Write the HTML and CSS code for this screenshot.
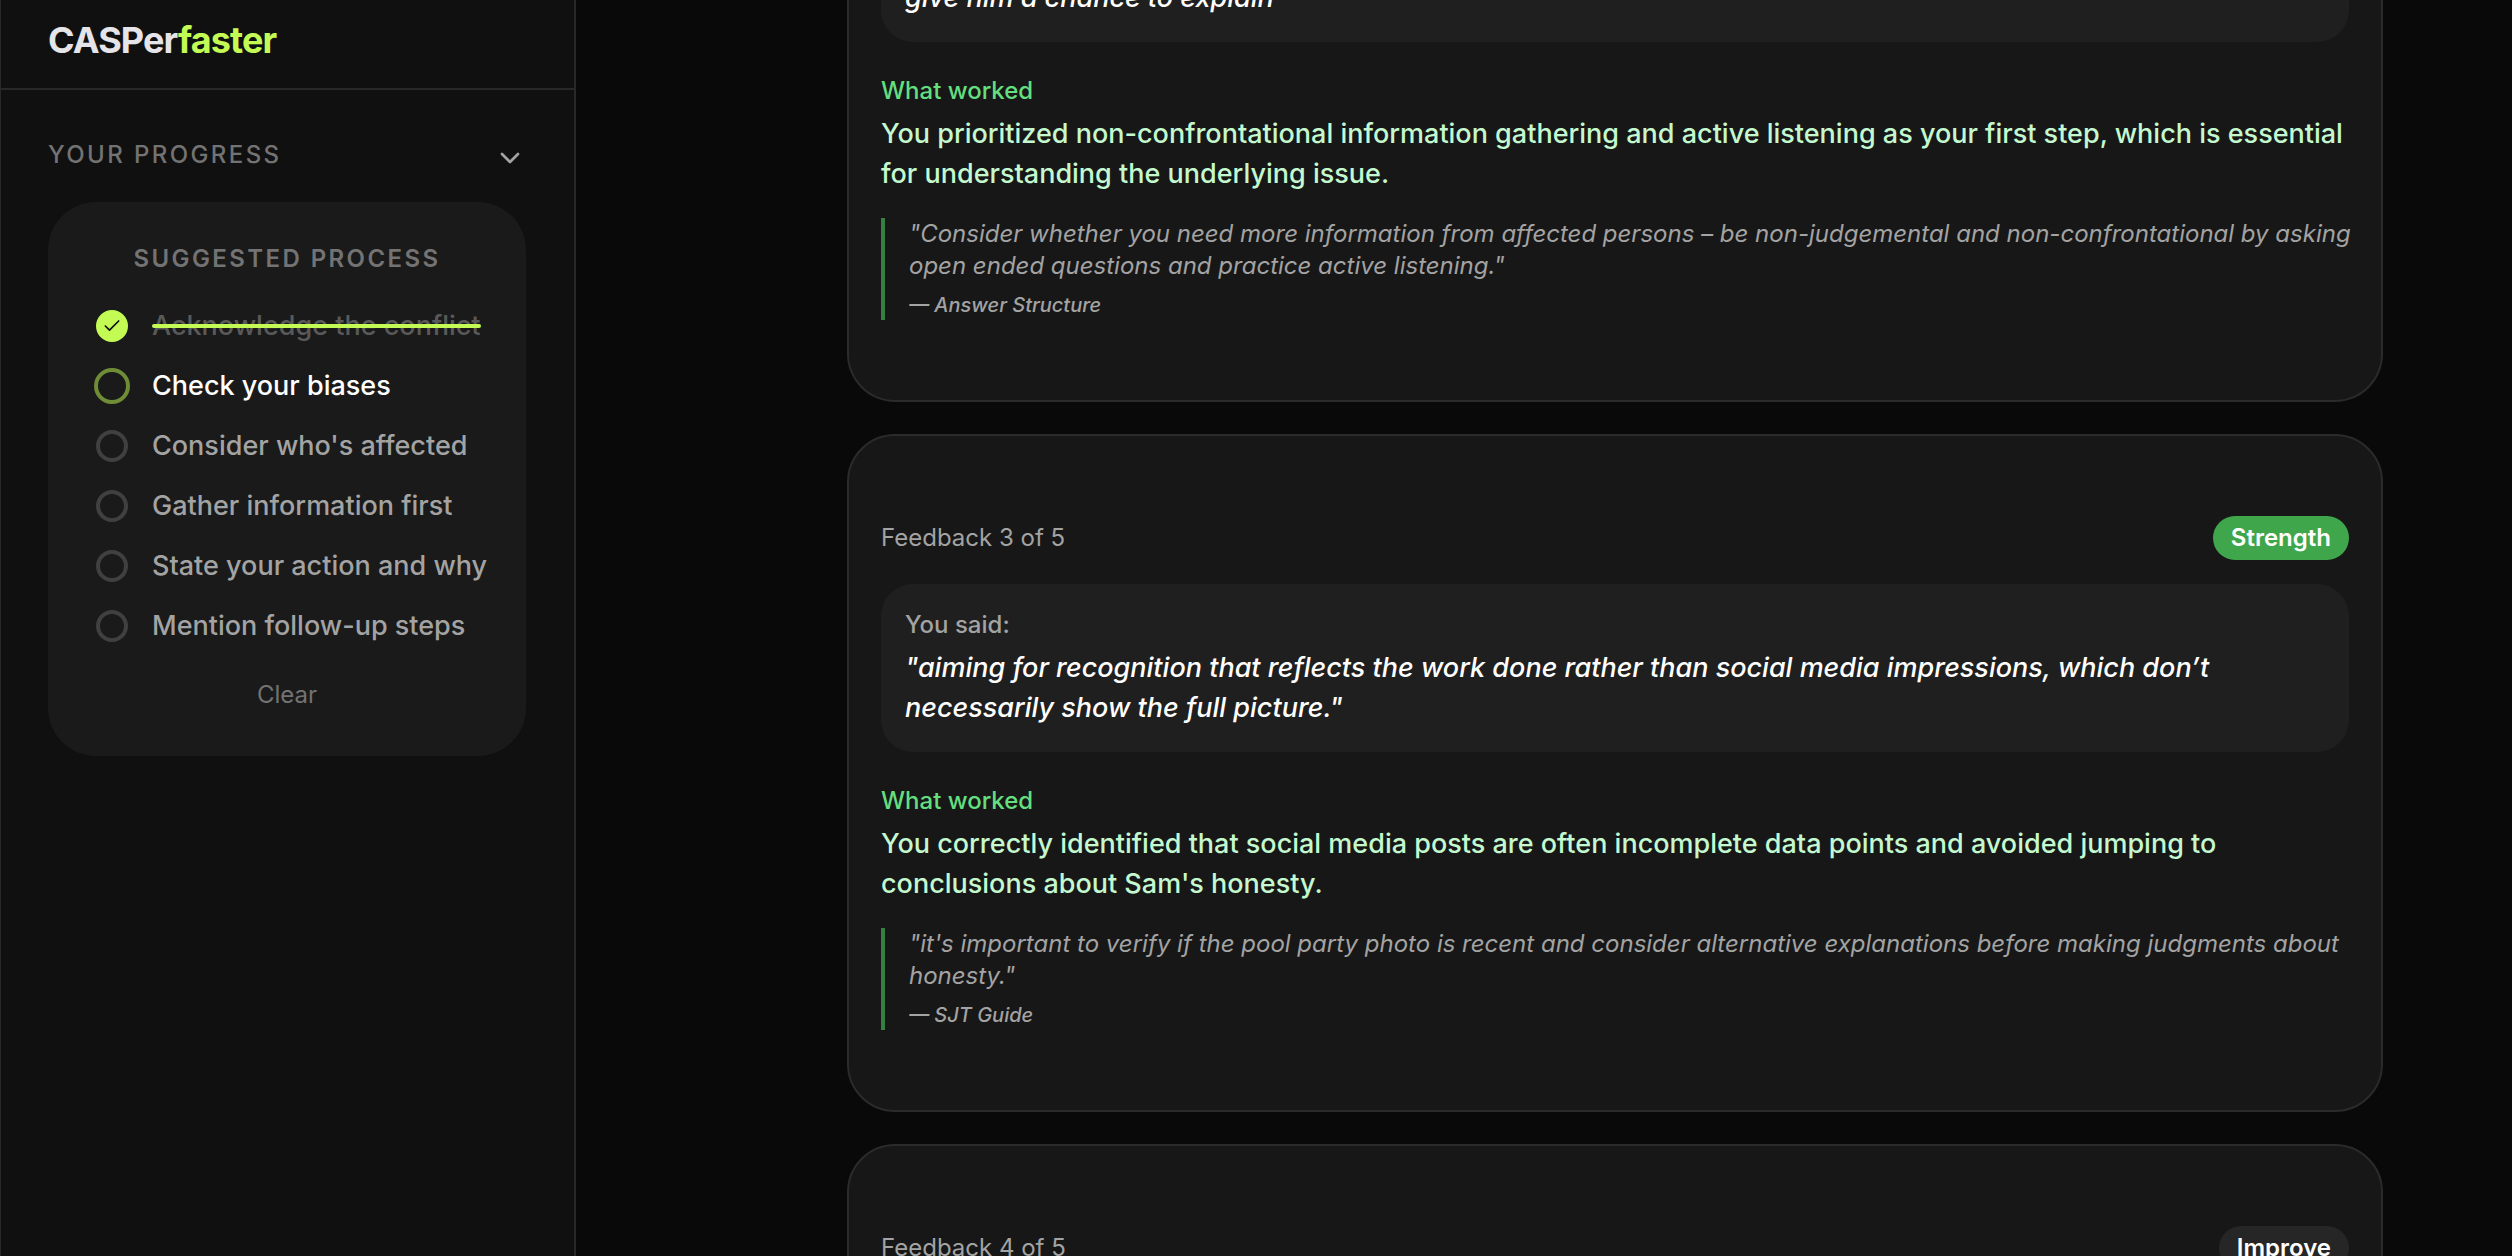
FILE: index.html
```html
<!DOCTYPE html>
<html lang="en">
  <head>
    <meta charset="UTF-8" />
    <meta name="viewport" content="width=device-width,initial-scale=1.0" />
    <title>CASPerfaster</title>
    <link rel="stylesheet" href="styles.css">
  </head>
  <body>
    <aside class="sidebar">
      <header class="brand">
        <a href="#" class="logo">CASPer<span>faster</span></a>
      </header>
      <section class="progress">
        <button type="button" class="progress-toggle">
          Your progress
          <svg viewBox="0 0 24 24"><path d="M6 9l6 6 6-6" /></svg>
        </button>
        <div class="process">
          <h2>Suggested process</h2>
          <ul>
            <li>
              <label class="step done">
                <span class="tick">
                  <input type="checkbox" checked>
                  <svg viewBox="0 0 24 24"><path d="M20 6L9 17l-5-5" /></svg>
                </span>
                <span class="text">Acknowledge the conflict</span>
              </label>
            </li>
            <li>
              <label class="step current">
                <span class="tick"><input type="checkbox"></span>
                <span class="text">Check your biases</span>
              </label>
            </li>
            <li>
              <label class="step">
                <span class="tick"><input type="checkbox"></span>
                <span class="text">Consider who's affected</span>
              </label>
            </li>
            <li>
              <label class="step">
                <span class="tick"><input type="checkbox"></span>
                <span class="text">Gather information first</span>
              </label>
            </li>
            <li>
              <label class="step">
                <span class="tick"><input type="checkbox"></span>
                <span class="text">State your action and why</span>
              </label>
            </li>
            <li>
              <label class="step">
                <span class="tick"><input type="checkbox"></span>
                <span class="text">Mention follow-up steps</span>
              </label>
            </li>
          </ul>
          <button type="button" class="clear">Clear</button>
        </div>
      </section>
    </aside>

    <main class="feedback">
      <article class="card card-cut">
        <div class="said">
          <p class="quote">give him a chance to explain"</p>
        </div>
        <h3>What worked</h3>
        <p class="worked">You prioritized non-confrontational information gathering and active listening as your first step, which is essential for understanding the underlying issue.</p>
        <blockquote>
          <p>"Consider whether you need more information from affected persons – be non-judgemental and non-confrontational by asking open ended questions and practice active listening."</p>
          <cite>— Answer Structure</cite>
        </blockquote>
      </article>

      <article class="card">
        <div class="card-head">
          <span>Feedback 3 of 5</span>
          <span class="badge strength">Strength</span>
        </div>
        <div class="said">
          <h4>You said:</h4>
          <p class="quote">"aiming for recognition that reflects the work done rather than social media impressions, which don’t necessarily show the full picture."</p>
        </div>
        <h3>What worked</h3>
        <p class="worked">You correctly identified that social media posts are often incomplete data points and avoided jumping to conclusions about Sam's honesty.</p>
        <blockquote>
          <p>"it's important to verify if the pool party photo is recent and consider alternative explanations before making judgments about honesty."</p>
          <cite>— SJT Guide</cite>
        </blockquote>
      </article>

      <article class="card">
        <div class="card-head">
          <span>Feedback 4 of 5</span>
          <span class="badge">Improve</span>
        </div>
      </article>
    </main>
  </body>
</html>
```
FILE: styles.css
```css
* {
  box-sizing: border-box;
  margin: 0;
  padding: 0;
}
body {
  display: flex;
  height: 100vh;
  overflow: hidden;
  background: #090909;
  color: #fff;
  font-family: Inter, "Liberation Sans", sans-serif;
  font-size: 24px;
  line-height: 32px;
}
button {
  background: none;
  border: none;
  font: inherit;
  cursor: pointer;
}
svg {
  fill: none;
  stroke: currentColor;
  stroke-width: 2;
  stroke-linecap: round;
  stroke-linejoin: round;
}

/* sidebar */
.sidebar {
  flex: none;
  width: 576px;
  background: #101010;
  border-left: 1px solid #282828;
  border-right: 2px solid #282828;
}
.brand {
  height: 90px;
  padding: 20px 47px;
  border-bottom: 2px solid #282828;
}
.logo {
  color: #e4e4e9;
  font-size: 36px;
  font-weight: 700;
  line-height: 40px;
  letter-spacing: -0.025em;
  text-decoration: none;
}
.logo span {
  color: #c3fb54;
}
.progress {
  padding: 48px 48px 48px 47px;
}
.progress-toggle {
  display: flex;
  justify-content: space-between;
  width: 100%;
  color: #737373;
  font-weight: 500;
  line-height: 34px;
  letter-spacing: 0.1em;
  text-transform: uppercase;
}
.progress-toggle svg {
  width: 32px;
  height: 32px;
  margin-top: 4px;
  color: #a3a3a3;
}
.process {
  margin-top: 28px;
  padding: 40px 24px 44px 48px;
  background: #1a1a1a;
  border-radius: 48px;
}
.process h2 {
  margin: 0 24px 30px 0;
  color: #737373;
  font-size: 24px;
  font-weight: 600;
  line-height: 34px;
  letter-spacing: 0.1em;
  text-align: center;
  text-transform: uppercase;
}
.process ul {
  display: flex;
  flex-direction: column;
  gap: 20px;
  list-style: none;
}
.step {
  display: flex;
  align-items: center;
  gap: 24px;
  color: #a3a3a3;
  font-size: 27px;
  font-weight: 500;
  line-height: 40px;
  white-space: nowrap;
}
.tick {
  display: grid;
  place-content: center;
  place-items: center;
  width: 32px;
  height: 32px;
}
.tick input, .tick svg {
  grid-area: 1 / 1;
}
.tick input {
  appearance: none;
  width: 32px;
  height: 32px;
  border: 4px solid #404040;
  border-radius: 50%;
}
.tick svg {
  z-index: 1;
  width: 20px;
  height: 20px;
  color: #0f0f0f;
}
.done .tick input {
  background: #c3fb54;
  border-color: #c3fb54;
}
.done .text {
  position: relative;
  color: #595959;
}
.done .text::after {
  content: "";
  position: absolute;
  top: 18px;
  left: 0;
  width: 100%;
  height: 4px;
  background: #c3fb54;
  border-radius: 2px;
}
.current {
  color: #fff;
}
.current .tick input {
  width: 36px;
  height: 36px;
  border-color: #6f8c36;
}
.clear {
  display: block;
  margin: 32px auto 0;
  padding-right: 24px;
  color: #737373;
  line-height: 34px;
}

/* feedback cards */
.feedback {
  flex: 1;
  display: flex;
  flex-direction: column;
  align-items: flex-end;
  gap: 32px;
  padding: 0 129px 0 64px;
}
.card {
  flex: none;
  width: 100%;
  max-width: 1536px;
  padding: 80px 32px;
  background: #171717;
  border: 2px solid #2b2b2b;
  border-radius: 48px;
}
/* list is scrolled, the first card runs under the top edge */
.card-cut {
  margin-top: -22px;
  padding-top: 0;
  border-top: none;
  border-radius: 0 0 48px 48px;
}
.card-cut .said {
  padding-top: 0;
  border-radius: 0 0 32px 32px;
}
.card-head {
  display: flex;
  align-items: center;
  justify-content: space-between;
  margin-bottom: 24px;
  color: #a3a3a3;
}
.badge {
  padding: 6px 18px;
  background: #262626;
  border-radius: 22px;
  color: #fff;
  font-weight: 600;
}
.strength {
  background: #3fa64c;
}
.said {
  margin-bottom: 32px;
  padding: 24px;
  background: #1f1f1f;
  border-radius: 32px;
}
.said h4 {
  margin-bottom: 6px;
  color: #a3a3a3;
  font-weight: 500;
  line-height: 34px;
}
.quote {
  font-size: 27px;
  font-style: italic;
  font-weight: 500;
  line-height: 40px;
}
.card h3 {
  margin-bottom: 6px;
  color: #63df7f;
  font-size: 24px;
  font-weight: 500;
  line-height: 34px;
}
.worked {
  margin-bottom: 24px;
  color: #c4f8cf;
  font-size: 27px;
  font-weight: 500;
  line-height: 40px;
}
blockquote {
  margin-right: -12px;
  padding-left: 24px;
  border-left: 4px solid #348040;
  color: #a3a3a3;
  font-style: italic;
}
blockquote cite {
  display: block;
  margin-top: 8px;
  font-size: 20px;
  font-weight: 500;
  line-height: 30px;
}
```
